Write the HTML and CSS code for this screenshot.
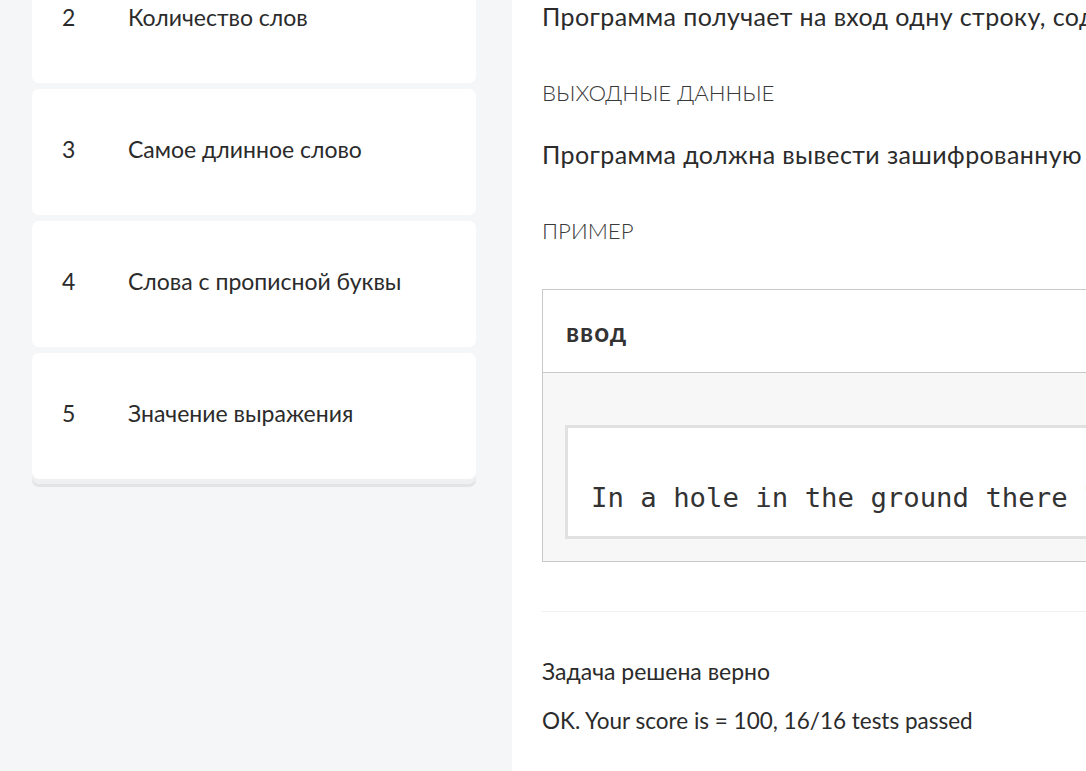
FILE: index.html
```html
<!DOCTYPE html>
<html lang="ru">
<head>
<meta charset="utf-8">
<title>Задачи</title>
<link rel="stylesheet" href="styles.css">
</head>
<body>
<div class="page">
  <aside class="sidebar">
    <ul class="task-list">
      <li class="task-card"><span class="task-num">2</span><span class="task-title">Количество слов</span></li>
      <li class="task-card"><span class="task-num">3</span><span class="task-title">Самое длинное слово</span></li>
      <li class="task-card"><span class="task-num">4</span><span class="task-title">Слова с прописной буквы</span></li>
      <li class="task-card task-card--last"><span class="task-num">5</span><span class="task-title">Значение выражения</span></li>
    </ul>
  </aside>
  <main class="content">
    <div class="content-inner">
      <p class="text text--first">Программа получает на вход одну строку, содержащую текст на английском языке.</p>
      <h3 class="section-title">Выходные данные</h3>
      <p class="text">Программа должна вывести зашифрованную строку.</p>
      <h3 class="section-title section-title--example">Пример</h3>
      <div class="sample">
        <div class="sample-head">ввод</div>
        <div class="sample-body">
          <pre class="sample-pre">In a hole in the ground there lived a hobbit.</pre>
        </div>
      </div>
      <hr class="divider">
      <p class="result-title">Задача решена верно</p>
      <p class="result-text">OK. Your score is = 100, 16/16 tests passed</p>
    </div>
  </main>
</div>
</body>
</html>
```
FILE: styles.css
```css
html, body {
  margin: 0;
  padding: 0;
  height: 100%;
  overflow: hidden;
  background: #ffffff;
  font-family: Lato, "Noto Sans", sans-serif;
  color: #2b2b2b;
}

.page {
  display: grid;
  grid-template-columns: 512px 1fr;
  height: 771px;
}

.sidebar {
  background: #f5f6f8;
  padding: 0 36px 0 32px;
  overflow: hidden;
}

.task-list {
  list-style: none;
  margin: -43px 0 0 0;
  padding: 0;
  display: flex;
  flex-direction: column;
  gap: 6px;
}

.task-card {
  height: 126px;
  box-sizing: border-box;
  padding-bottom: 6px;
  background: #ffffff;
  border-radius: 7px;
  display: flex;
  align-items: center;
  font-size: 23px;
  color: #2b2b2b;
}

.task-card--last {
  box-shadow: 0 5px 0 #eef0f2, 0 8px 0 #e3e4e6;
}

.task-num {
  width: 96px;
  padding-left: 30px;
  box-sizing: border-box;
}

.content {
  overflow: hidden;
}

.content-inner {
  width: 1100px;
  padding: 0 0 0 30px;
}

.text {
  margin: 0;
  font-size: 25px;
  letter-spacing: 0.4px;
  line-height: 33px;
  white-space: nowrap;
}

.section-title {
  margin: 45px 0 30px;
  font-size: 22.2px;
  line-height: 30px;
  font-weight: 300;
  text-transform: uppercase;
  color: #3a3a3a;
}

.section-title--example {
  margin: 45px 0 43px;
}

.sample {
  width: 900px;
  border: 1px solid #c9c9c9;
}

.sample-head {
  height: 83px;
  display: flex;
  align-items: center;
  padding-left: 23px;
  padding-top: 2px;
  font-size: 26px;
  letter-spacing: 1px;
  font-weight: 700;
  color: #333;
  border-bottom: 1px solid #c9c9c9;
  box-sizing: border-box;
}

.sample-body {
  background: #f7f7f7;
  padding: 52px 0 22px 22px;
}

.sample-pre {
  margin: 0;
  background: #ffffff;
  border: 3px solid #e1e1e1;
  padding: 55px 23px 23px;
  font-family: "DejaVu Sans Mono", "Liberation Mono", monospace;
  font-size: 27.3px;
  line-height: 30px;
  color: #333;
}

.divider {
  margin: 49px 0 0 0;
  width: 900px;
  border: 0;
  height: 1px;
  background: #f0f0f0;
}

.result-title {
  margin: 44px 0 0;
  font-size: 23px;
  line-height: 30px;
}

.result-text {
  margin: 20px 0 0;
  font-size: 22.5px;
  line-height: 30px;
}
```
